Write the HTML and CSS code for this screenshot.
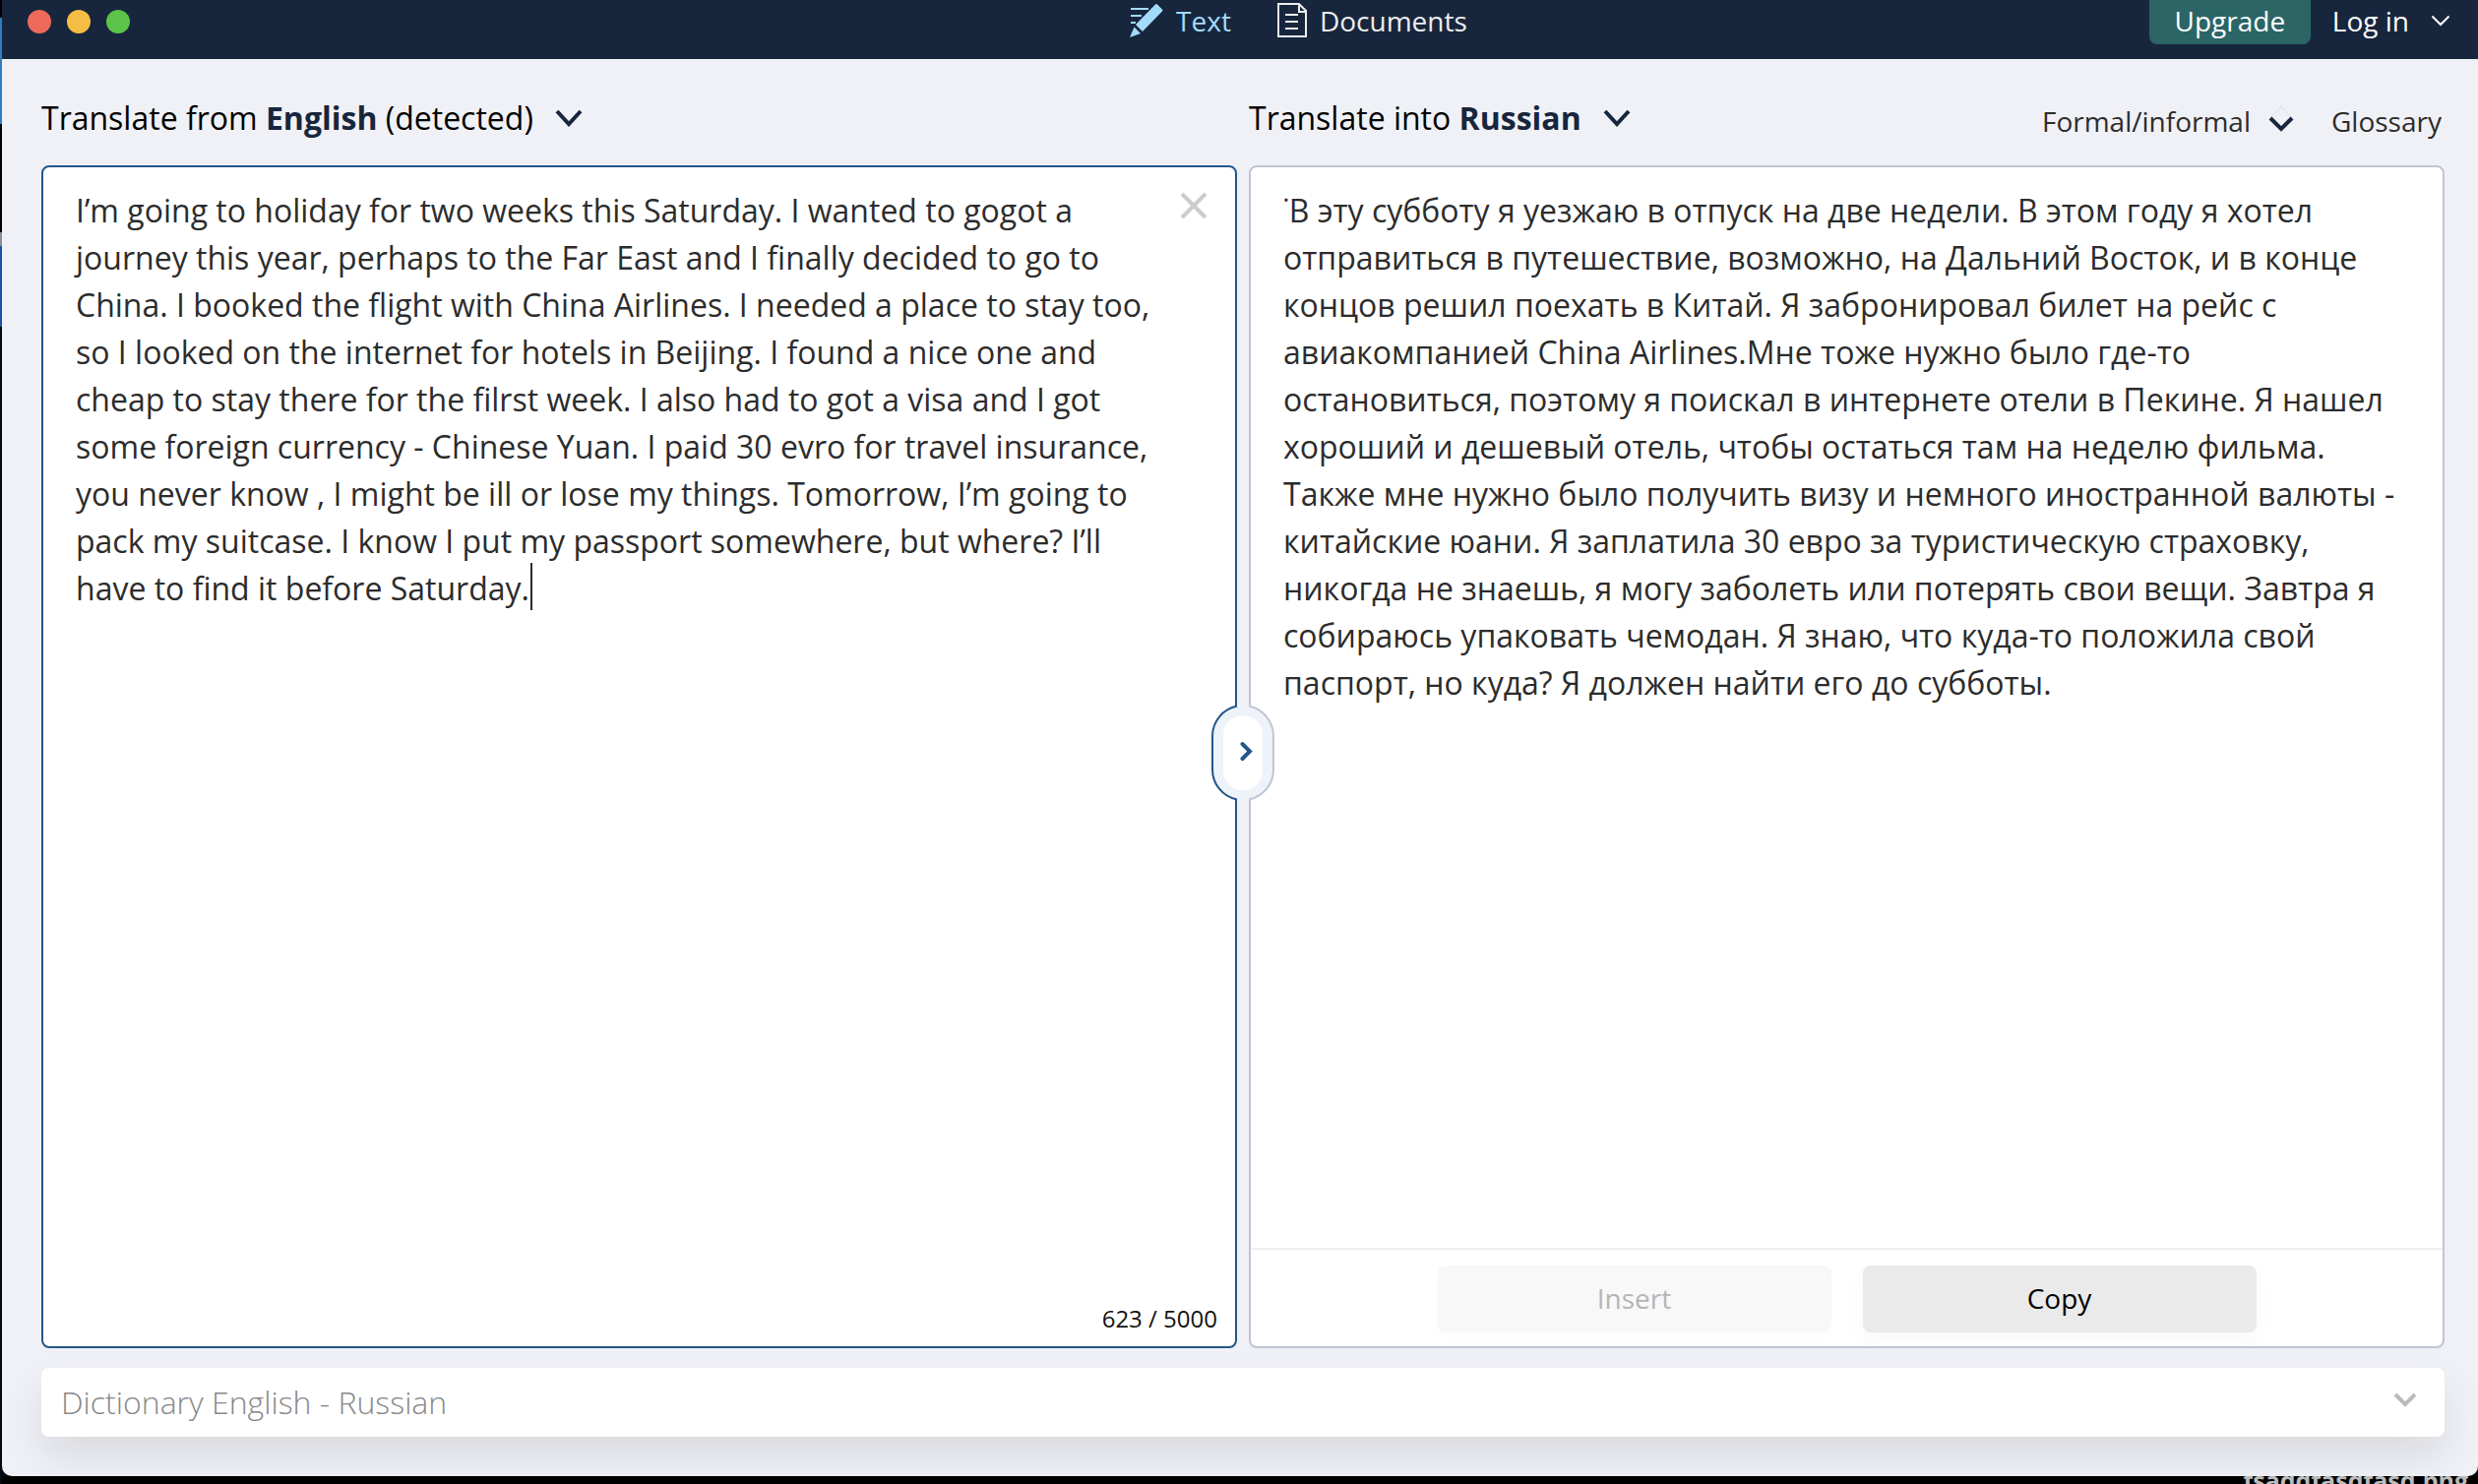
FILE: index.html
```html
<!DOCTYPE html>
<html lang="en">
<head>
<meta charset="utf-8">
<title>Translator</title>
<link rel="stylesheet" href="styles.css">
</head>
<body>
<div class="window">
  <header class="topbar">
    <div class="lights"><span class="light red"></span><span class="light yellow"></span><span class="light green"></span></div>
    <nav class="tabs">
      <a class="tab active" href="#text"><svg width="36" height="36" viewBox="0 0 36 36" aria-hidden="true"><path d="M2 6h18M2 13h11M2 20h5" stroke="currentColor" stroke-width="2"/><path d="M27 1.500q1-1 2 0l5 5q1 1 0 2L14 29l-7-7z" fill="currentColor"/><path d="M5.500 24.500l6.500 6.500-11 4z" fill="currentColor"/></svg>Text</a>
      <a class="tab" href="#documents"><svg width="32" height="36" viewBox="0 0 32 36" aria-hidden="true"><path d="M2 1h21l7 7v26H2zM23 1v8h7M9 12h13M9 19h13M9 26h13" fill="none" stroke="currentColor" stroke-width="2"/></svg>Documents</a>
    </nav>
    <div class="account">
      <button class="upgrade" type="button">Upgrade</button>
      <button class="login" type="button">Log in<svg width="20" height="12" viewBox="0 0 20 12" aria-hidden="true"><path d="M1.500 1.500L10 10l8.500-8.500" fill="none" stroke="currentColor" stroke-width="2"/></svg></button>
    </div>
  </header>
  <main class="content">
    <div class="columns">
      <section class="column">
        <div class="langbar">
          <button class="lang" type="button"><span>Translate from <b>English</b> (detected)</span><svg width="28" height="20" viewBox="0 0 28 20" aria-hidden="true"><path d="M2 3l12 13L26 3" fill="none" stroke="currentColor" stroke-width="4"/></svg></button>
        </div>
        <div class="panel source">
          <textarea class="text source-text" aria-label="Source text" spellcheck="false">I’m going to holiday for two weeks this Saturday. I wanted to gogot a journey this year, perhaps to the Far East and I finally decided to go to China. I booked the flight with China Airlines. I needed a place to stay too, so I looked on the internet for hotels in Beijing. I found a nice one and cheap to stay there for the filrst week. I also had to got a visa and I got some foreign currency - Chinese Yuan. I paid 30 evro for travel insurance, you never know , I might be ill or lose my things. Tomorrow, I’m going to pack my suitcase. I know I put my passport somewhere, but where? I’ll have to find it before Saturday.</textarea>
          <span class="caret"></span>
          <button class="clear" type="button" aria-label="Clear text"><svg width="28" height="28" viewBox="0 0 28 28" aria-hidden="true"><path d="M2 2l24 24M26 2L2 26" stroke="currentColor" stroke-width="4"/></svg></button>
          <div class="counter">623 / 5000</div>
        </div>
      </section>
      <section class="column">
        <div class="langbar">
          <button class="lang" type="button"><span>Translate into <b>Russian</b></span><svg width="28" height="20" viewBox="0 0 28 20" aria-hidden="true"><path d="M2 3l12 13L26 3" fill="none" stroke="currentColor" stroke-width="4"/></svg></button>
          <div class="options">
            <button class="option" type="button">Formal/informal<svg width="26" height="34" viewBox="0 0 26 34" aria-hidden="true"><path d="M2 14L13 2l11 12" fill="none" stroke="#dcdee2" stroke-width="1"/><path d="M2 14l11 11 11-11" fill="none" stroke="#17263d" stroke-width="4"/></svg></button>
            <button class="option" type="button">Glossary</button>
          </div>
        </div>
        <div class="panel">
          <textarea class="text" aria-label="Translation" lang="ru" spellcheck="false" readonly>˙В эту субботу я уезжаю в отпуск на две недели. В этом году я хотел отправиться в путешествие, возможно, на Дальний Восток, и в конце концов решил поехать в Китай. Я забронировал билет на рейс с авиакомпанией China Airlines.Мне тоже нужно было где-то остановиться, поэтому я поискал в интернете отели в Пекине. Я нашел хороший и дешевый отель, чтобы остаться там на неделю фильма. Также мне нужно было получить визу и немного иностранной валюты - китайские юани. Я заплатила 30 евро за туристическую страховку, никогда не знаешь, я могу заболеть или потерять свои вещи. Завтра я собираюсь упаковать чемодан. Я знаю, что куда-то положила свой паспорт, но куда? Я должен найти его до субботы.</textarea>
          <div class="actions">
            <button class="action" type="button" disabled>Insert</button>
            <button class="action" type="button">Copy</button>
          </div>
        </div>
      </section>
      <button class="swap" type="button" aria-label="Swap languages"><svg width="64" height="98" viewBox="0 0 64 98" aria-hidden="true"><rect x="1" y="1" width="62" height="96" rx="31" fill="#eef2f9"/><path d="M26 1.500A31 31 0 0 0 1 32v34a31 31 0 0 0 25 30.500" fill="none" stroke="#23578a" stroke-width="2"/><path d="M38 1.500A31 31 0 0 1 63 32v34a31 31 0 0 1-25 30.500" fill="none" stroke="#bfc5d2" stroke-width="2"/><rect x="12" y="11" width="40" height="76" rx="20" fill="#fff"/><path d="M31.500 40L39 47.500 31.500 55" fill="none" stroke="#23578a" stroke-width="4" stroke-linecap="round"/></svg></button>
    </div>
    <button class="dictionary" type="button">Dictionary English - Russian<svg width="24" height="22" viewBox="0 0 24 22" aria-hidden="true"><path d="M2 4l10 10L22 4" fill="none" stroke="#bbb" stroke-width="4"/></svg></button>
  </main>
</div>
<div class="desktop"><span>fsaddfasdfasd.png</span></div>
</body>
</html>
```
FILE: styles.css
```css
* { box-sizing: border-box; }
body {
  margin: 0;
  height: 100vh;
  display: flex;
  flex-direction: column;
  overflow: hidden;
  padding-left: 2px;
  background: linear-gradient(#000 0 18px, #2f7ec2 18px 126px, #000 126px 236px, #8b8f98 236px 250px, #1f4fa8 250px 332px, #020a14 332px);
  font-family: "Open Sans", sans-serif;
  color: #2c2c2c;
}
button {
  font: inherit;
  color: inherit;
  border: 0;
  padding: 0;
  background: none;
}
svg { display: block; flex: none; }
.window {
  flex: 1;
  min-height: 0;
  display: flex;
  flex-direction: column;
  overflow: hidden;
  background: #f0f1f6;
  border-radius: 0 0 10px 10px;
}
.topbar {
  display: grid;
  grid-template-columns: 112fr auto 100fr;
  height: 60px;
  padding: 0 28px 0 26px;
  background: #17263d;
  color: #fff;
  font-size: 28px;
  line-height: 42px;
}
.lights { display: flex; gap: 16px; padding-top: 10px; }
.light { width: 24px; height: 24px; border-radius: 50%; }
.red { background: #ed6a5a; }
.yellow { background: #f5bd43; }
.green { background: #5bc349; }
.tabs { display: flex; gap: 46px; }
.tab {
  display: flex;
  gap: 12px;
  height: 42px;
  align-items: center;
  color: #ededed;
  text-decoration: none;
}
.tab.active { color: #a3dbfb; }
.account { display: flex; justify-content: flex-end; gap: 22px; }
.upgrade {
  width: 164px;
  height: 45px;
  border-radius: 0 0 8px 8px;
  background: #2b6566;
  padding-bottom: 4px;
}
.login { display: flex; align-items: center; gap: 22px; height: 42px; }
.content {
  flex: 1;
  min-height: 0;
  display: flex;
  flex-direction: column;
  gap: 20px;
  padding: 0 34px 40px 40px;
}
.columns {
  position: relative;
  flex: 1;
  min-height: 0;
  display: grid;
  grid-template-columns: 1fr 1fr;
  gap: 12px;
}
.column { display: flex; flex-direction: column; min-width: 0; }
.langbar {
  display: flex;
  justify-content: space-between;
  align-items: center;
  height: 108px;
  padding-top: 12px;
}
.lang {
  display: flex;
  align-items: center;
  gap: 22px;
  font-size: 32px;
  line-height: 48px;
  color: #000;
}
.lang b, .lang svg { color: #17263d; }
.options {
  display: flex;
  gap: 38px;
  padding: 6px 3px 0 0;
  font-size: 28px;
  line-height: 42px;
}
.option { display: flex; align-items: center; gap: 18px; }
.panel {
  position: relative;
  flex: 1;
  min-height: 0;
  display: flex;
  flex-direction: column;
  border: 2px solid #bfc5d2;
  border-radius: 8px;
  background: #fff;
}
.source { border-color: #23578a; }
.text {
  flex: 1;
  min-height: 0;
  border: 0;
  outline: 0;
  resize: none;
  overflow: hidden;
  background: none;
  padding: 20px 32px 0 33px;
  font: 32px/48px "Open Sans", sans-serif;
  color: #2c2c2c;
}
.source-text { padding-right: 70px; caret-color: transparent; }
.caret {
  position: absolute;
  left: 495px;
  top: 402px;
  width: 2px;
  height: 48px;
  background: #2c2c2c;
}
.clear {
  position: absolute;
  top: 25px;
  right: 28px;
  color: #ccc;
}
.counter {
  align-self: flex-end;
  padding: 0 18px 10px 0;
  font-size: 24px;
  line-height: 36px;
  color: #111;
}
.actions {
  display: flex;
  justify-content: center;
  gap: 32px;
  height: 100px;
  padding-top: 16px;
  border-top: 2px solid #eee;
}
.action {
  width: 400px;
  height: 68px;
  padding-bottom: 2px;
  border-radius: 8px;
  background: #eaeaea;
  box-shadow: 0 8px 20px #00200808;
  font-size: 28px;
  color: #000;
}
.action:disabled { background: #f8f8f8; color: #b5b5b5; box-shadow: 0 4px 16px #00000003; }
.swap {
  position: absolute;
  top: 656px;
  left: 50%;
  transform: translateX(-50%);
}
.dictionary {
  display: flex;
  justify-content: space-between;
  align-items: center;
  height: 70px;
  padding: 0 28px 2px 20px;
  border-radius: 8px;
  background: #fff;
  box-shadow: 0 20px 40px #00000018;
  font-size: 32px;
  font-weight: 300;
  color: #888;
}
.desktop {
  display: flex;
  justify-content: flex-end;
  height: 8px;
  padding-right: 10px;
  overflow: hidden;
  background: #000;
  color: #bbb;
  font-size: 25px;
  font-weight: 700;
  line-height: 8px;
}
```
